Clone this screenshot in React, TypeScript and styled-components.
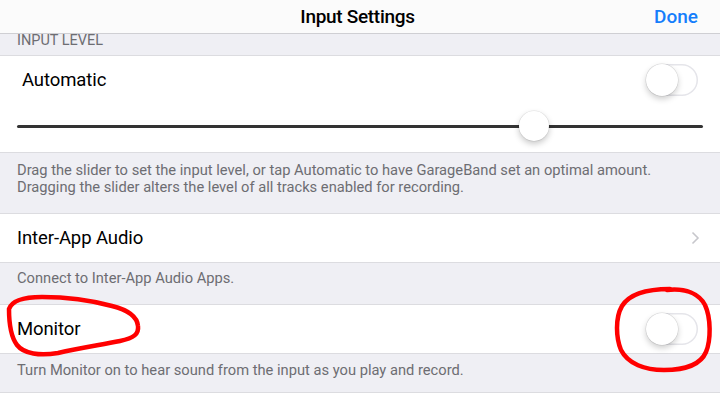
import React from "react";
import styled, { createGlobalStyle } from "styled-components";

const Global = createGlobalStyle`
  html, body { margin: 0; padding: 0; background: #ffffff; }
  body { font-family: Roboto, "Liberation Sans", sans-serif; -webkit-font-smoothing: antialiased; }
  #root { width: 720px; height: 405px; overflow: hidden; }
`;

const Page = styled.div`
  position: relative;
  width: 720px;
  height: 405px;
  display: flex;
  flex-direction: column;
  background: #efeff4;
  overflow: hidden;
`;

const NavBar = styled.div`
  height: 34px;
  flex: 0 0 34px;
  background: #fbfbfb;
  border-bottom: 1px solid #cfcfd3;
  box-sizing: border-box;
  display: grid;
  grid-template-columns: 1fr auto 1fr;
  align-items: center;
  padding: 0 22px 0 17px;
`;

const Title = styled.div`
  grid-column: 2;
  font-size: 19px;
  font-weight: 500;
  color: #000;
  letter-spacing: -0.3px;
  margin-top: -1px;
`;

const DoneButton = styled.div`
  grid-column: 3;
  justify-self: end;
  font-size: 19px;
  font-weight: 500;
  color: #157efb;
  margin-top: -1px;
`;

const SectionHeader = styled.div`
  height: 22px;
  flex: 0 0 22px;
  box-sizing: border-box;
  padding: 0 17px;
  font-size: 14.5px;
  line-height: 14px;
  color: #6d6d72;
  text-transform: uppercase;
  display: flex;
  align-items: flex-start;
  border-bottom: 1px solid #dcdce0;
`;

const Group = styled.div<{ $h: number }>`
  flex: 0 0 ${(p) => p.$h}px;
  height: ${(p) => p.$h}px;
  box-sizing: border-box;
  background: #ffffff;
  display: flex;
  flex-direction: column;
`;

const Row = styled.div<{ $pl?: number }>`
  height: 48px;
  flex: 0 0 48px;
  display: flex;
  align-items: center;
  justify-content: space-between;
  padding: 0 22px 0 ${(p) => p.$pl ?? 17}px;
`;

const Label = styled.div`
  font-size: 18.5px;
  color: #000;
  letter-spacing: -0.1px;
`;

const Footer = styled.div<{ $h: number; $pt: number }>`
  flex: 0 0 ${(p) => p.$h}px;
  height: ${(p) => p.$h}px;
  box-sizing: border-box;
  padding: ${(p) => p.$pt}px 17px 0;
  font-size: 14.7px;
  line-height: 16.5px;
  color: #6d6d72;
  border-top: 1px solid #dcdce0;
  border-bottom: 1px solid #dcdce0;
`;

const Rest = styled.div`
  flex: 1;
  background: #ffffff;
`;

const SwitchTrack = styled.div`
  position: relative;
  width: 52px;
  height: 32px;
  border-radius: 16px;
  background: #fff;
  box-shadow: inset 0 0 0 1.5px #e5e5ea;
`;

const SwitchKnob = styled.div`
  position: absolute;
  left: 0;
  top: 0;
  width: 32px;
  height: 32px;
  border-radius: 50%;
  background: #fff;
  box-shadow: 0 3px 6px rgba(0, 0, 0, 0.2), 0 0 0 0.5px rgba(0, 0, 0, 0.12);
`;

const SliderArea = styled.div`
  flex: 1;
  display: flex;
  align-items: center;
  padding: 0 17px 0 17px;
  margin-top: -4px;
`;

const SliderTrack = styled.div`
  position: relative;
  flex: 1;
  height: 3px;
  background: #333333;
  border-radius: 2px;
`;

const SliderThumb = styled.div`
  position: absolute;
  top: 50%;
  width: 30px;
  height: 30px;
  margin: -15px 0 0 -15px;
  border-radius: 50%;
  background: #fff;
  box-shadow: 0 3px 6px rgba(0, 0, 0, 0.22), 0 0 0 0.5px rgba(0, 0, 0, 0.1);
`;

const Chevron = styled.svg`
  width: 9px;
  height: 14px;
  margin-right: -2px;
`;

const Annotations = styled.svg`
  position: absolute;
  left: 0;
  top: 0;
  width: 720px;
  height: 405px;
  pointer-events: none;
`;

function Switch() {
  return (
    <SwitchTrack>
      <SwitchKnob />
    </SwitchTrack>
  );
}

export default function App() {
  const sliderValue = 0.753;
  return (
    <>
      <Global />
      <Page>
        <NavBar>
          <Title>Input Settings</Title>
          <DoneButton>Done</DoneButton>
        </NavBar>
        <SectionHeader>Input Level</SectionHeader>
        <Group $h={96}>
          <Row $pl={22}>
            <Label>Automatic</Label>
            <Switch />
          </Row>
          <SliderArea>
            <SliderTrack>
              <SliderThumb style={{ left: `${sliderValue * 100}%` }} />
            </SliderTrack>
          </SliderArea>
        </Group>
        <Footer $h={62} $pt={9}>
          Drag the slider to set the input level, or tap Automatic to have GarageBand set an optimal amount.
          <br />
          Dragging the slider alters the level of all tracks enabled for recording.
        </Footer>
        <Group $h={48}>
          <Row>
            <Label>Inter-App Audio</Label>
            <Chevron viewBox="0 0 9 14">
              <path d="M1.5 1.5 L7 7 L1.5 12.5" fill="none" stroke="#c7c7cc" strokeWidth="1.6" />
            </Chevron>
          </Row>
        </Group>
        <Footer $h={43} $pt={7}>Connect to Inter-App Audio Apps.</Footer>
        <Group $h={48}>
          <Row>
            <Label>Monitor</Label>
            <Switch />
          </Row>
        </Group>
        <Footer $h={40} $pt={8}>Turn Monitor on to hear sound from the input as you play and record.</Footer>
        <Rest />
        <Annotations viewBox="0 0 720 405">
          <path
            d="M9 309 C12 300 25 297 42 297 C65 297 90 300 112 306 C128 310 137 316 138 326 C139 334 134 338 120 341 C100 345 80 348 58 353 C40 356 24 354 17 345 C11 337 9 322 9 309 Z"
            fill="none"
            stroke="#ff0000"
            strokeWidth="4.5"
            strokeLinejoin="round"
          />
          <path
            d="M670 289 C650 289 630 293 622 306 C615 318 616 338 621 350 C628 364 645 370 664 370 C684 370 700 366 706 352 C711 340 711 318 705 305 C699 294 686 288 667 290"
            fill="none"
            stroke="#ff0000"
            strokeWidth="4.5"
            strokeLinecap="round"
          />
        </Annotations>
      </Page>
    </>
  );
}
